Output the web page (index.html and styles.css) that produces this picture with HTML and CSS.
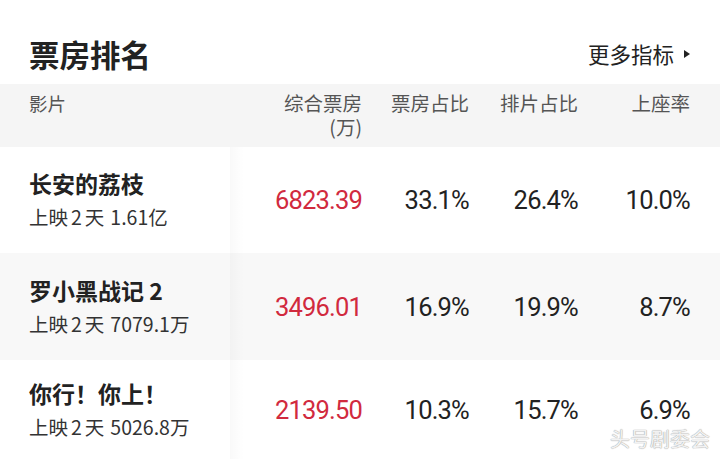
FILE: index.html
```html
<!DOCTYPE html>
<html lang="zh">
<head>
<meta charset="utf-8">
<link rel="stylesheet" href="styles.css">
</head>
<body>
<div class="page">
  <div class="top">
    <h1 class="title">票房排名</h1>
    <div class="more">更多指标<span class="tri"></span></div>
  </div>
  <div class="table">
    <div class="row head">
      <div class="cell name"><span class="hname">影片</span></div>
      <div class="cell num">综合票房<br>(万)</div>
      <div class="cell num">票房占比</div>
      <div class="cell num">排片占比</div>
      <div class="cell num">上座率</div>
    </div>
    <div class="row">
      <div class="cell name">
        <div class="mtitle">长安的荔枝</div>
        <div class="msub">上映<span class="d">2</span>天<span class="n">1.61亿</span></div>
      </div>
      <div class="cell num val red">6823.39</div>
      <div class="cell num val">33.1%</div>
      <div class="cell num val">26.4%</div>
      <div class="cell num val">10.0%</div>
    </div>
    <div class="row alt">
      <div class="cell name">
        <div class="mtitle">罗小黑战记 2</div>
        <div class="msub">上映<span class="d">2</span>天<span class="n">7079.1万</span></div>
      </div>
      <div class="cell num val red">3496.01</div>
      <div class="cell num val">16.9%</div>
      <div class="cell num val">19.9%</div>
      <div class="cell num val">8.7%</div>
    </div>
    <div class="row last">
      <div class="cell name">
        <div class="mtitle">你行！你上！</div>
        <div class="msub">上映<span class="d">2</span>天<span class="n">5026.8万</span></div>
      </div>
      <div class="cell num val red">2139.50</div>
      <div class="cell num val">10.3%</div>
      <div class="cell num val">15.7%</div>
      <div class="cell num val">6.9%</div>
    </div>
  </div>
  <div class="watermark">头号剧委会</div>
</div>
</body>
</html>
```
FILE: styles.css
```css
* { box-sizing: border-box; }
html, body { margin: 0; padding: 0; background: #fff; }
body {
  width: 720px;
  height: 459px;
  overflow: hidden;
  font-family: "Noto Sans CJK SC", "Noto Sans", sans-serif;
  color: #222;
}
.page { position: relative; width: 720px; height: 459px; }
.top {
  height: 84px;
  padding: 24px 29px 0 29px;
  display: flex;
  align-items: center;
  justify-content: space-between;
}
.title {
  margin: 0;
  font-size: 30.5px;
  font-weight: 700;
  line-height: 60px;
  color: #222;
}
.more {
  display: flex;
  align-items: center;
  font-size: 21.5px;
  color: #222;
  line-height: 60px;
  margin-right: 1px;
}
.tri {
  width: 0; height: 0;
  margin-left: 10px;
  border-top: 4.5px solid transparent;
  border-bottom: 4.5px solid transparent;
  border-left: 6px solid #222;
}
.table { display: flex; flex-direction: column; }
.row {
  display: grid;
  grid-template-columns: 230px 132px 107px 109px 112px;
  height: 106px;
  align-items: center;
  background: #fff;
}
.row.alt { background: #f8f8f8; height: 107px; }
.row.head {
  height: 63px;
  background: #f5f5f5;
  align-items: start;
  padding-top: 7px;
  font-size: 19.5px;
  line-height: 24px;
  color: #555;
}
.cell.name { position: relative; padding-left: 29px; height: 100%; display: flex; flex-direction: column; justify-content: center; }
.row.head .cell.name { justify-content: flex-start; }
.row:not(.head) .cell.name::after {
  content: "";
  position: absolute;
  top: 0; bottom: 0; right: -14px;
  width: 14px;
  background: linear-gradient(to right, rgba(0,0,0,0.022), rgba(0,0,0,0));
}
.hname { font-size: 18.5px; }
.num { text-align: right; }
.mtitle {
  font-size: 23px;
  font-weight: 600;
  line-height: 34px;
  color: #222;
}
.msub {
  font-size: 19.5px;
  line-height: 34px;
  color: #333;
}
.msub .d { margin: 0 3px 0 3px; }
.msub .n { margin-left: 6px; }
.val {
  font-family: Roboto, "Noto Sans", sans-serif;
  font-size: 25.5px;
  letter-spacing: -0.8px;
  color: #222;
  font-weight: 400;
}
.val.red { color: #d12a3e; }
.row.last { height: 99px; }
.watermark {
  position: absolute;
  right: 10px;
  bottom: 8px;
  font-size: 20px;
  line-height: 24px;
  color: #f2f2f2;
  text-shadow: 0 0 1px #999, 0 0 1px #bbb;
}
```
